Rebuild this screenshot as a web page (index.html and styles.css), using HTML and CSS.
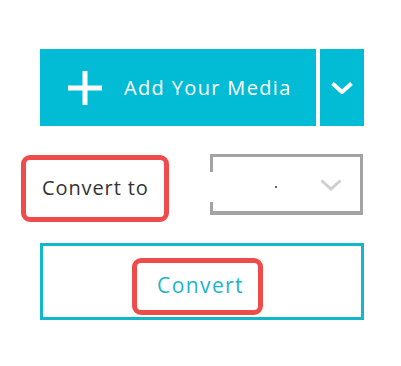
FILE: index.html
```html
<!DOCTYPE html>
<html>
<head>
<meta charset="utf-8">
<link rel="stylesheet" href="styles.css">
</head>
<body>
<div class="page">
  <div class="upload">
    <div class="upload-main">
      <svg class="plus" width="34" height="34" viewBox="0 0 34 34"><path d="M17 0V34M0 17H34" stroke="#fff" stroke-width="5"/></svg>
      <span class="upload-label">Add Your Media</span>
    </div>
    <div class="upload-more">
      <svg width="22" height="12" viewBox="0 0 22 12"><polyline points="1.5,1.5 11,10 20.5,1.5" fill="none" stroke="#fff" stroke-width="4" stroke-linejoin="miter"/></svg>
    </div>
  </div>
  <div class="convert-row">
    <div class="convert-label">Convert to</div>
    <div class="format-select">
      <span class="dot"></span>
      <svg class="select-chevron" width="22" height="12" viewBox="0 0 22 12"><polyline points="1.5,1.5 11,10 20.5,1.5" fill="none" stroke="#cfcfcf" stroke-width="3"/></svg>
    </div>
  </div>
  <div class="convert-box">
    <div class="convert-btn">Convert</div>
  </div>
</div>
</body>
</html>
```
FILE: styles.css
```css
html, body {
  margin: 0;
  padding: 0;
  background: #fff;
}
.page {
  width: 324px;
  padding: 49px 0 0 40px;
  font-family: "Open Sans", "Lato", sans-serif;
}
.upload {
  display: flex;
  gap: 4px;
  height: 77px;
}
.upload-main {
  width: 276px;
  background: #02bcd5;
  display: flex;
  align-items: center;
  padding-left: 28px;
  box-sizing: border-box;
}
.plus {
  display: block;
}
.upload-label {
  margin-left: 22px;
  color: #fff;
  font-size: 20px;
  letter-spacing: 1.35px;
  padding-bottom: 1px;
}
.upload-more {
  width: 44px;
  background: #02bcd5;
  display: flex;
  align-items: center;
  justify-content: center;
  padding-top: 1px;
  box-sizing: border-box;
}
.upload-more svg {
  display: block;
}
.convert-row {
  display: flex;
  align-items: flex-start;
  margin-top: 28px;
}
.convert-label {
  margin-left: -19px;
  margin-top: 1px;
  width: 148px;
  height: 67px;
  box-sizing: border-box;
  border: 5px solid #ef4b4b;
  border-radius: 9px;
  display: flex;
  align-items: center;
  padding-left: 16px;
  padding-bottom: 3px;
  color: #333;
  font-size: 20px;
  letter-spacing: 0.9px;
}
.format-select {
  position: relative;
  margin-left: 41px;
  width: 153px;
  height: 61px;
  box-sizing: border-box;
  border: 3px solid #a3a3a3;
  border-bottom-width: 4px;
  display: flex;
  align-items: center;
  justify-content: flex-end;
  padding-right: 18px;
}
.format-select::before {
  content: "";
  position: absolute;
  left: -3px;
  top: 15px;
  width: 4px;
  height: 30px;
  background: #fff;
}
.dot {
  position: absolute;
  left: 62px;
  top: 29px;
  width: 2px;
  height: 2px;
  background: #666;
}
.select-chevron {
  display: block;
  margin-top: 1px;
}
.convert-box {
  margin-top: 21px;
  width: 324px;
  height: 77px;
  box-sizing: border-box;
  border: 3px solid #12b7cc;
  padding: 12px 0 0 89px;
}
.convert-btn {
  width: 131px;
  height: 57px;
  box-sizing: border-box;
  border: 5px solid #ef4b4b;
  border-radius: 9px;
  display: flex;
  align-items: center;
  justify-content: center;
  padding-left: 6px;
  padding-bottom: 4px;
  color: #1cb5c9;
  font-size: 21px;
  letter-spacing: 1.4px;
}
```
